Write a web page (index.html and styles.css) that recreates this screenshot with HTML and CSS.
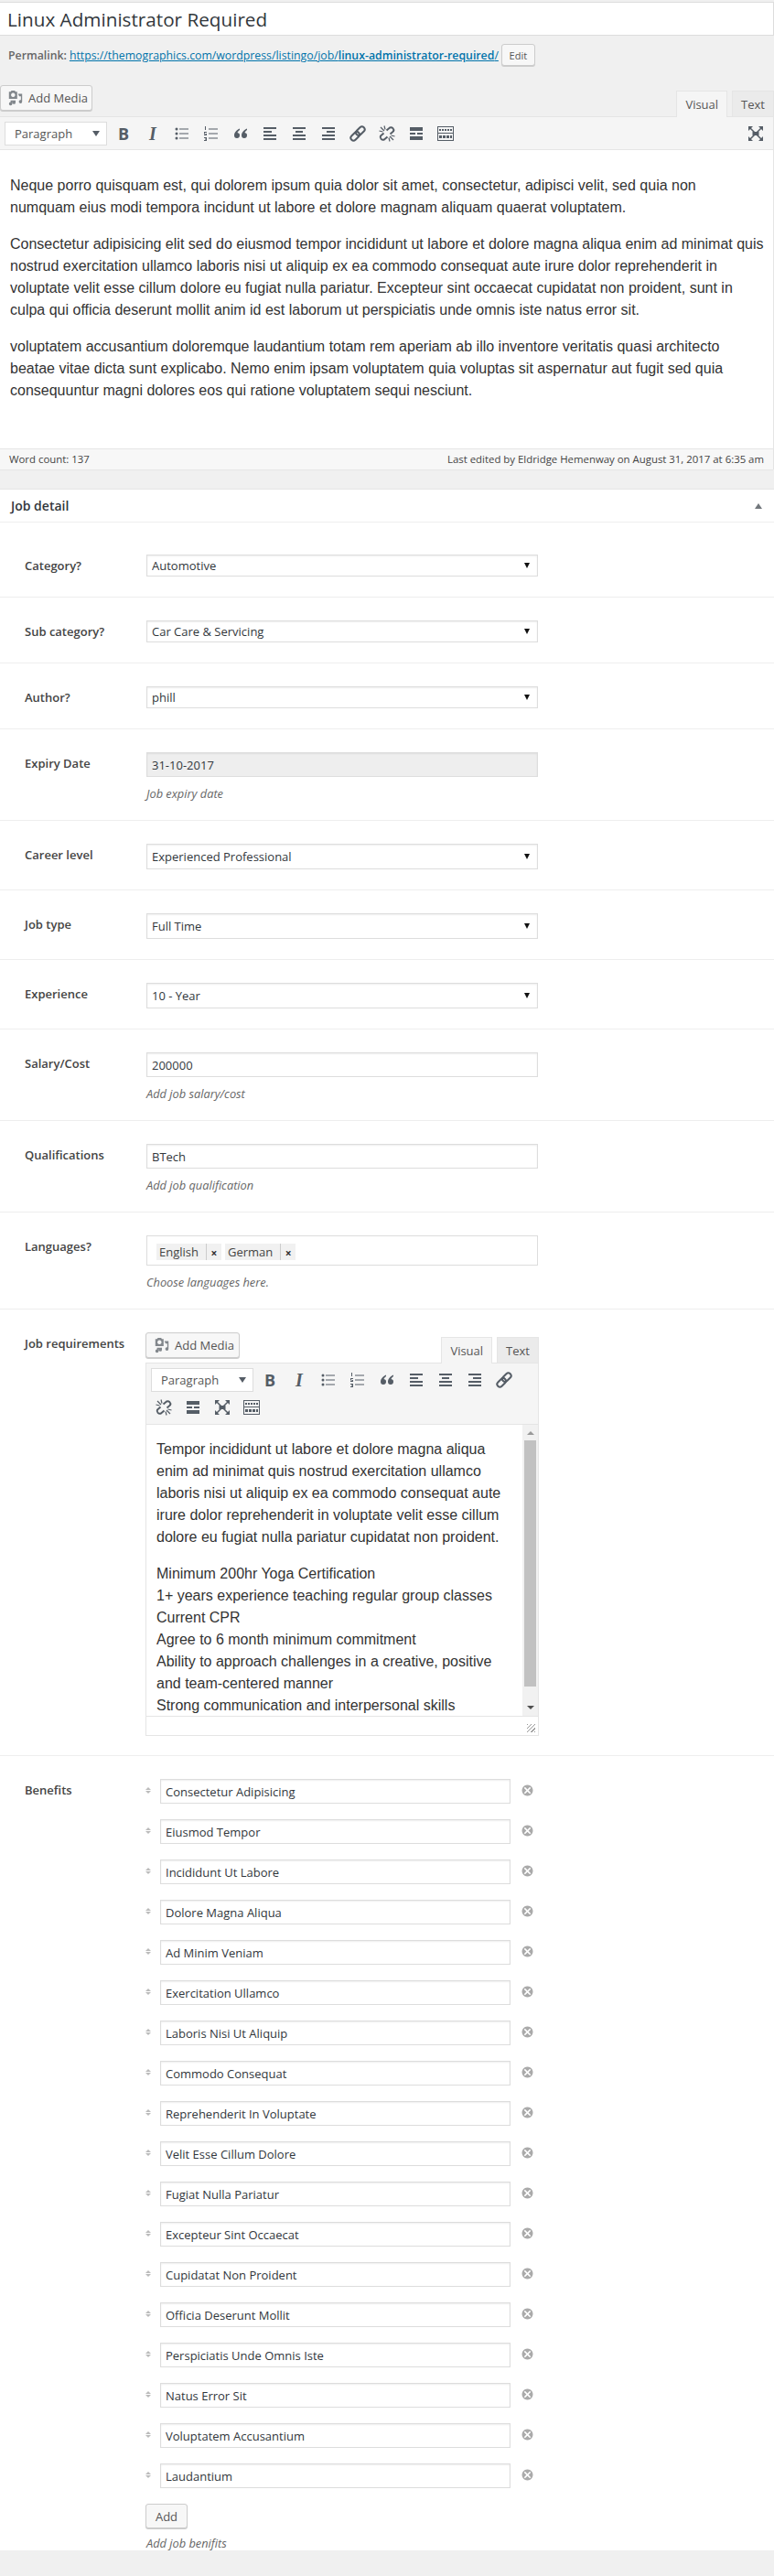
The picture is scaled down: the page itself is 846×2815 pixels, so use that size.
FILE: index.html
```html
<!DOCTYPE html>
<html lang="en">

<head>
    <meta charset="UTF-8">
    <title>Edit Job</title>
    <link rel="stylesheet" href="styles.css">
</head>

<body>
    <svg class="sprite" xmlns="http://www.w3.org/2000/svg">
        <symbol id="i-media" viewBox="0 0 20 20">
            <path d="M5 1h4l1 1.500h2V11H2V2.500h2z M7 4a2.500 2.500 0 1 0 .01 0z" fill-rule="evenodd" />
            <path d="M13 5h5v9.500a2 2 0 1 1-1.500-1.900V8h-2z M4 13h6v2.500a2 2 0 1 1-1.500-1.900V14.500H6v2.500a2 2 0 1 1-2-1.900z" />
        </symbol>
        <symbol id="i-ul" viewBox="0 0 20 20">
            <circle cx="4" cy="5" r="1.500" /><circle cx="4" cy="10" r="1.500" /><circle cx="4" cy="15" r="1.500" />
            <path d="M7 4.500h10v1H7zM7 9.500h10v1H7zM7 14.500h10v1H7z" />
        </symbol>
        <symbol id="i-ol" viewBox="0 0 20 20">
            <path d="M7 4.500h10v1H7zM7 9.500h10v1H7zM7 14.500h10v1H7z" />
            <path d="M3 2h1v4H3zM2 8h3v1H3v1h2v2H2v-1h2v-.5H2zM2 14h3v4H2v-1h2v-.5H3v-1h1V15H2z" />
        </symbol>
        <symbol id="i-quote" viewBox="0 0 20 20">
            <path d="M9 4.500C6 6 3 8.500 3 12a3 3 0 1 0 3.500-3c.3-1 1.300-2 2.500-3z M17 4.500c-3 1.500-6 4-6 7.500a3 3 0 1 0 3.500-3c.3-1 1.300-2 2.500-3z" />
        </symbol>
        <symbol id="i-left" viewBox="0 0 20 20">
            <path d="M3 3h14v2H3zM3 7h9v2H3zM3 11h14v2H3zM3 15h14v2H3z" />
        </symbol>
        <symbol id="i-center" viewBox="0 0 20 20">
            <path d="M3 3h14v2H3zM6 7h8v2H6zM3 11h14v2H3zM3 15h14v2H3z" />
        </symbol>
        <symbol id="i-right" viewBox="0 0 20 20">
            <path d="M3 3h14v2H3zM8 7h9v2H8zM3 11h14v2H3zM3 15h14v2H3z" />
        </symbol>
        <symbol id="i-link" viewBox="0 0 20 20">
            <g transform="rotate(-45 10 10)" fill="none" stroke="currentColor" stroke-width="2">
                <rect x="0.500" y="7" width="11" height="6" rx="3" />
                <rect x="8.500" y="7" width="11" height="6" rx="3" />
            </g>
        </symbol>
        <symbol id="i-unlink" viewBox="0 0 20 20">
            <path d="M9.500 6.500l3.500-3a3 3 0 0 1 4 4L13.500 10.500M10.500 13.500l-3.500 3a3 3 0 0 1-4-4L6.500 9.500" fill="none" stroke="currentColor" stroke-width="2" />
            <path d="M3 3l4 4M7 1.500l1 4M1.500 7l4 1M13 13l4 4M12 14.500l1 4M14.500 12l4 1" fill="none" stroke="currentColor" stroke-width="1.200" />
        </symbol>
        <symbol id="i-hr" viewBox="0 0 20 20">
            <path d="M3 3h14v4H3zM3 9h6v2H3zM11 9h6v2h-6zM3 13h14v4H3z" />
        </symbol>
        <symbol id="i-kb" viewBox="0 0 20 20">
            <path d="M1 2h18v16H1z M2 3v6h16V3z M2 10v7h16v-7z" fill-rule="evenodd" />
            <path d="M3 5h14v2H3z M3 12h14v3H3z" />
            <path d="M5 5h1v2H5zM8 5h1v2H8zM11 5h1v2h-1zM14 5h1v2h-1zM6 12h1v3H6zM10 12h1v3h-1zM14 12h1v3h-1z" fill="#f5f5f5" />
        </symbol>
        <symbol id="i-full" viewBox="0 0 20 20">
            <path d="M2 2h5L2 7zM18 2h-5l5 5zM2 18h5l-5-5zM18 18h-5l5-5z" />
            <path d="M4 4l12 12M16 4L4 16" fill="none" stroke="currentColor" stroke-width="1.500" />
            <path d="M6.500 8h7v4h-7z" />
        </symbol>
        <symbol id="i-remove" viewBox="0 0 20 20">
            <path d="M10 2a8 8 0 1 0 .01 0z M6.500 5L10 8.500 13.500 5 15 6.500 11.500 10l3.500 3.500-1.500 1.500L10 11.500 6.500 15 5 13.500 8.500 10 5 6.500z" fill-rule="evenodd" />
        </symbol>
    </svg>

    <div class="title-wrap">
        <input class="title-input" type="text" value="Linux Administrator Required">
    </div>
    <div class="permalink">
        <strong>Permalink:</strong>
        <a href="#">https://themographics.com/wordpress/listingo/job/<b>linux-administrator-required</b>/</a>
        <button class="btn btn-small" type="button">Edit</button>
    </div>

    <div class="editor-top">
        <button class="btn btn-media" type="button"><svg class="media-icon"><use href="#i-media" /></svg>Add Media</button>
        <div class="tabs">
            <span class="tab tab-on">Visual</span>
            <span class="tab">Text</span>
        </div>
    </div>
    <div class="editor main-editor">
        <div class="toolbar">
            <div class="format-select">Paragraph</div>
            <span class="tool tool-b">B</span>
            <span class="tool tool-i">I</span>
            <span class="tool"><svg><use href="#i-ul" /></svg></span>
            <span class="tool"><svg><use href="#i-ol" /></svg></span>
            <span class="tool"><svg><use href="#i-quote" /></svg></span>
            <span class="tool"><svg><use href="#i-left" /></svg></span>
            <span class="tool"><svg><use href="#i-center" /></svg></span>
            <span class="tool"><svg><use href="#i-right" /></svg></span>
            <span class="tool"><svg><use href="#i-link" /></svg></span>
            <span class="tool"><svg><use href="#i-unlink" /></svg></span>
            <span class="tool"><svg><use href="#i-hr" /></svg></span>
            <span class="tool"><svg><use href="#i-kb" /></svg></span>
            <span class="tool tool-end"><svg><use href="#i-full" /></svg></span>
        </div>
        <div class="content main-content">
            <p>Neque porro quisquam est, qui dolorem ipsum quia dolor sit amet, consectetur, adipisci velit, sed quia non numquam eius modi tempora incidunt ut labore et dolore magnam aliquam quaerat voluptatem.</p>
            <p>Consectetur adipisicing elit sed do eiusmod tempor incididunt ut labore et dolore magna aliqua enim ad minimat quis nostrud exercitation ullamco laboris nisi ut aliquip ex ea commodo consequat aute irure dolor reprehenderit in voluptate velit esse cillum dolore eu fugiat nulla pariatur. Excepteur sint occaecat cupidatat non proident, sunt in culpa qui officia deserunt mollit anim id est laborum ut perspiciatis unde omnis iste natus error sit.</p>
            <p>voluptatem accusantium doloremque laudantium totam rem aperiam ab illo inventore veritatis quasi architecto beatae vitae dicta sunt explicabo. Nemo enim ipsam voluptatem quia voluptas sit aspernatur aut fugit sed quia consequuntur magni dolores eos qui ratione voluptatem sequi nesciunt.</p>
        </div>
        <div class="status">
            <span>Word count: 137</span>
            <span>Last edited by Eldridge Hemenway on August 31, 2017 at 6:35 am</span>
        </div>
    </div>

    <div class="postbox">
        <div class="postbox-head">
            <h2>Job detail</h2>
            <span class="collapse"></span>
        </div>

        <div class="field field-first">
            <label>Category?</label>
            <div class="control"><div class="select-wrap"><select><option>Automotive</option></select></div></div>
        </div>
        <div class="field">
            <label>Sub category?</label>
            <div class="control"><div class="select-wrap"><select><option>Car Care &amp; Servicing</option></select></div></div>
        </div>
        <div class="field">
            <label>Author?</label>
            <div class="control"><div class="select-wrap"><select><option>phill</option></select></div></div>
        </div>
        <div class="field">
            <label>Expiry Date</label>
            <div class="control">
                <input class="text-input input-off" type="text" value="31-10-2017">
                <p class="help">Job expiry date</p>
            </div>
        </div>
        <div class="field field-tall">
            <label>Career level</label>
            <div class="control"><div class="select-wrap"><select><option>Experienced Professional</option></select></div></div>
        </div>
        <div class="field field-tall">
            <label>Job type</label>
            <div class="control"><div class="select-wrap"><select><option>Full Time</option></select></div></div>
        </div>
        <div class="field field-tall">
            <label>Experience</label>
            <div class="control"><div class="select-wrap"><select><option>10 - Year</option></select></div></div>
        </div>
        <div class="field">
            <label>Salary/Cost</label>
            <div class="control">
                <input class="text-input" type="text" value="200000">
                <p class="help">Add job salary/cost</p>
            </div>
        </div>
        <div class="field">
            <label>Qualifications</label>
            <div class="control">
                <input class="text-input" type="text" value="BTech">
                <p class="help">Add job qualification</p>
            </div>
        </div>
        <div class="field">
            <label>Languages?</label>
            <div class="control">
                <div class="tags">
                    <span class="tag">English<i>×</i></span>
                    <span class="tag">German<i>×</i></span>
                </div>
                <p class="help">Choose languages here.</p>
            </div>
        </div>

        <div class="field">
            <label>Job requirements</label>
            <div class="control">
                <div class="editor-top sub-top">
                    <button class="btn btn-media" type="button"><svg class="media-icon"><use href="#i-media" /></svg>Add Media</button>
                    <div class="tabs">
                        <span class="tab tab-on">Visual</span>
                        <span class="tab">Text</span>
                    </div>
                </div>
                <div class="editor sub-editor">
                    <div class="toolbar">
                        <div class="format-select">Paragraph</div>
                        <span class="tool tool-b">B</span>
                        <span class="tool tool-i">I</span>
                        <span class="tool"><svg><use href="#i-ul" /></svg></span>
                        <span class="tool"><svg><use href="#i-ol" /></svg></span>
                        <span class="tool"><svg><use href="#i-quote" /></svg></span>
                        <span class="tool"><svg><use href="#i-left" /></svg></span>
                        <span class="tool"><svg><use href="#i-center" /></svg></span>
                        <span class="tool"><svg><use href="#i-right" /></svg></span>
                        <span class="tool"><svg><use href="#i-link" /></svg></span>
                        <span class="tool"><svg><use href="#i-unlink" /></svg></span>
                        <span class="tool"><svg><use href="#i-hr" /></svg></span>
                        <span class="tool"><svg><use href="#i-full" /></svg></span>
                        <span class="tool"><svg><use href="#i-kb" /></svg></span>
                    </div>
                    <div class="sub-body">
                        <div class="content sub-content">
                            <p>Tempor incididunt ut labore et dolore magna aliqua enim ad minimat quis nostrud exercitation ullamco laboris nisi ut aliquip ex ea commodo consequat aute irure dolor reprehenderit in voluptate velit esse cillum dolore eu fugiat nulla pariatur cupidatat non proident.</p>
                            <p>Minimum 200hr Yoga Certification<br>1+ years experience teaching regular group classes<br>Current CPR<br>Agree to 6 month minimum commitment<br>Ability to approach challenges in a creative, positive and team-centered manner<br>Strong communication and interpersonal skills</p>
                        </div>
                        <div class="scrollbar">
                            <span class="arrow-up"></span>
                            <span class="thumb"></span>
                            <span class="arrow-down"></span>
                        </div>
                    </div>
                    <div class="sub-status"><span class="grip"></span></div>
                </div>
            </div>
        </div>

        <div class="field field-benefits">
            <label>Benefits</label>
            <div class="control">
                <div class="benefit"><span class="handle"></span><input class="text-input" type="text" value="Consectetur Adipisicing"><svg class="remove"><use href="#i-remove" /></svg></div>
                <div class="benefit"><span class="handle"></span><input class="text-input" type="text" value="Eiusmod Tempor"><svg class="remove"><use href="#i-remove" /></svg></div>
                <div class="benefit"><span class="handle"></span><input class="text-input" type="text" value="Incididunt Ut Labore"><svg class="remove"><use href="#i-remove" /></svg></div>
                <div class="benefit"><span class="handle"></span><input class="text-input" type="text" value="Dolore Magna Aliqua"><svg class="remove"><use href="#i-remove" /></svg></div>
                <div class="benefit"><span class="handle"></span><input class="text-input" type="text" value="Ad Minim Veniam"><svg class="remove"><use href="#i-remove" /></svg></div>
                <div class="benefit"><span class="handle"></span><input class="text-input" type="text" value="Exercitation Ullamco"><svg class="remove"><use href="#i-remove" /></svg></div>
                <div class="benefit"><span class="handle"></span><input class="text-input" type="text" value="Laboris Nisi Ut Aliquip"><svg class="remove"><use href="#i-remove" /></svg></div>
                <div class="benefit"><span class="handle"></span><input class="text-input" type="text" value="Commodo Consequat"><svg class="remove"><use href="#i-remove" /></svg></div>
                <div class="benefit"><span class="handle"></span><input class="text-input" type="text" value="Reprehenderit In Voluptate"><svg class="remove"><use href="#i-remove" /></svg></div>
                <div class="benefit"><span class="handle"></span><input class="text-input" type="text" value="Velit Esse Cillum Dolore"><svg class="remove"><use href="#i-remove" /></svg></div>
                <div class="benefit"><span class="handle"></span><input class="text-input" type="text" value="Fugiat Nulla Pariatur"><svg class="remove"><use href="#i-remove" /></svg></div>
                <div class="benefit"><span class="handle"></span><input class="text-input" type="text" value="Excepteur Sint Occaecat"><svg class="remove"><use href="#i-remove" /></svg></div>
                <div class="benefit"><span class="handle"></span><input class="text-input" type="text" value="Cupidatat Non Proident"><svg class="remove"><use href="#i-remove" /></svg></div>
                <div class="benefit"><span class="handle"></span><input class="text-input" type="text" value="Officia Deserunt Mollit"><svg class="remove"><use href="#i-remove" /></svg></div>
                <div class="benefit"><span class="handle"></span><input class="text-input" type="text" value="Perspiciatis Unde Omnis Iste"><svg class="remove"><use href="#i-remove" /></svg></div>
                <div class="benefit"><span class="handle"></span><input class="text-input" type="text" value="Natus Error Sit"><svg class="remove"><use href="#i-remove" /></svg></div>
                <div class="benefit"><span class="handle"></span><input class="text-input" type="text" value="Voluptatem Accusantium"><svg class="remove"><use href="#i-remove" /></svg></div>
                <div class="benefit"><span class="handle"></span><input class="text-input" type="text" value="Laudantium"><svg class="remove"><use href="#i-remove" /></svg></div>
                <button class="btn btn-add" type="button">Add</button>
                <p class="help">Add job benifits</p>
            </div>
        </div>
    </div>
</body>

</html>
```

FILE: styles.css
```css
* {
    box-sizing: border-box;
}

html,
body {
    height: 2815px;
}

body {
    margin: 0;
    padding-top: 2px;
    background: #f0f0f0;
    color: #444;
    font-family: "Open Sans", sans-serif;
    font-size: 13px;
    overflow: hidden;
}

.sprite {
    display: none;
}

/* title + permalink */
.title-wrap {
    height: 37px;
}

.title-input {
    display: block;
    width: 100%;
    height: 37px;
    padding: 0 8px;
    border: 1px solid #ddd;
    border-left: 0;
    background: #fff;
    color: #32373c;
    font-family: inherit;
    font-size: 20.700px;
    outline: 0;
}

.permalink {
    display: flex;
    align-items: center;
    gap: 3px;
    height: 33px;
    padding-left: 9px;
    padding-top: 9px;
    color: #666;
    font-size: 12.300px;
}

.permalink strong {
    font-weight: 600;
}

.permalink a {
    color: #0073aa;
}

.permalink b {
    font-weight: 600;
}

.btn {
    border: 1px solid #ccc;
    border-radius: 3px;
    background: #f7f7f7;
    box-shadow: 0 1px 0 #ccc;
    color: #555;
    font-family: inherit;
    font-size: 13px;
    padding: 0;
}

.btn-small {
    width: 37px;
    height: 24px;
    font-size: 11px;
}

/* editor */
.editor-top {
    display: flex;
    justify-content: space-between;
    align-items: flex-start;
    height: 55px;
    padding-top: 21px;
}

.btn-media {
    display: flex;
    align-items: center;
    width: 101px;
    height: 28px;
    padding-left: 7px;
}

.media-icon {
    width: 18px;
    height: 18px;
    margin-right: 5px;
    fill: #82878c;
}

.tabs {
    display: flex;
    gap: 5px;
    align-self: flex-end;
}

.tab {
    display: block;
    height: 28px;
    padding: 0 9px;
    border: 1px solid #e5e5e5;
    border-bottom: 0;
    background: #ebebeb;
    color: #555;
    line-height: 28px;
}

.tab-on {
    position: relative;
    z-index: 1;
    height: 29px;
    margin-bottom: -1px;
    background: #f5f5f5;
}

.editor {
    border: 1px solid #e5e5e5;
    background: #fff;
}

.main-editor {
    border-left: 0;
    border-bottom: 0;
}

.toolbar {
    display: flex;
    flex-wrap: wrap;
    align-items: center;
    row-gap: 4px;
    padding: 5px 3px;
    border-bottom: 1px solid #e5e5e5;
    background: #f5f5f5;
}

.main-editor .toolbar {
    padding-bottom: 4px;
}

.format-select {
    position: relative;
    width: 112px;
    height: 26px;
    margin: 0 2px;
    padding-left: 10px;
    border: 1px solid #ddd;
    background: #fff;
    color: #555;
    line-height: 24px;
}

.format-select::after {
    content: "";
    position: absolute;
    right: 7px;
    top: 9px;
    border: 4px solid transparent;
    border-top: 6px solid #555d66;
    border-bottom: 0;
}

.tool {
    display: flex;
    align-items: center;
    justify-content: center;
    width: 32px;
    height: 26px;
    color: #555d66;
}

.tool svg {
    width: 20px;
    height: 20px;
    fill: currentColor;
}

.tool-b {
    font-size: 18px;
    font-weight: 700;
}

.tool-i {
    font-family: "Liberation Serif", serif;
    font-size: 20px;
    font-style: italic;
    font-weight: 700;
}

.tool-end {
    margin-left: auto;
}

.content {
    color: #333;
    font-family: "Liberation Sans", Arial, sans-serif;
    font-size: 16px;
    line-height: 24px;
}

.content p {
    margin: 0 0 16px;
}

.main-content {
    height: 326px;
    padding: 27px 9px 0 11px;
}

.status {
    display: flex;
    justify-content: space-between;
    height: 23px;
    padding: 0 10px;
    border-top: 1px solid #e5e5e5;
    background: #f7f7f7;
    box-shadow: 0 1px 1px rgba(0, 0, 0, .04);
    font-size: 11.400px;
    line-height: 22px;
}

/* job detail box */
.postbox {
    margin-top: 21px;
    border-top: 1px solid #e5e5e5;
    background: #fff;
}

.postbox-head {
    display: flex;
    justify-content: space-between;
    align-items: center;
    height: 35px;
    padding: 0 13px 0 12px;
}

.postbox-head h2 {
    margin: 0;
    color: #32373c;
    font-size: 14px;
    font-weight: 600;
}

.collapse {
    border: 4px solid transparent;
    border-bottom: 6px solid #72777c;
    border-top: 0;
}

.field {
    display: flex;
    padding: 25px 0 21px 27px;
    border-top: 1px solid #eee;
}

.field-first {
    padding-top: 35px;
}

.field label {
    width: 133px;
    flex: none;
    padding-top: 3px;
    color: #444;
    font-weight: 600;
}

.control {
    width: 428px;
}

.select-wrap {
    position: relative;
    margin-bottom: 1px;
}

.select-wrap select {
    display: block;
    width: 100%;
    height: 24px;
    padding: 0 5px;
    border: 1px solid #ddd;
    border-radius: 0;
    background: #fff;
    color: #32373c;
    font-family: inherit;
    font-size: 13px;
    appearance: none;
    box-shadow: inset 0 1px 2px rgba(0, 0, 0, .07);
}

.field-tall .select-wrap select {
    height: 28px;
}

.select-wrap::after {
    content: "";
    position: absolute;
    right: 9px;
    top: 9px;
    border: 3px solid transparent;
    border-top: 6px solid #111;
    border-bottom: 0;
}

.field-tall .select-wrap::after {
    top: 11px;
}

.text-input {
    display: block;
    width: 100%;
    height: 27px;
    padding: 0 5px;
    border: 1px solid #ddd;
    background: #fff;
    color: #32373c;
    font-family: inherit;
    font-size: 13px;
    box-shadow: inset 0 1px 2px rgba(0, 0, 0, .07);
    outline: 0;
}

.input-off {
    background: #eee;
}

.help {
    margin: 10px 0 0;
    color: #666;
    font-size: 12.800px;
    font-style: italic;
    line-height: 16px;
}

.tags {
    display: flex;
    gap: 4px;
    height: 33px;
    padding: 8px 10px;
    border: 1px solid #ddd;
}

.tag {
    display: flex;
    height: 18px;
    padding-left: 3px;
    background: #f1f1f1;
    line-height: 18px;
}

.tag i {
    width: 17px;
    margin-left: 8px;
    padding-top: 2px;
    border-left: 1px solid #ccc;
    color: #333;
    text-align: center;
    font-size: 12px;
    font-style: normal;
    font-weight: 700;
}

.sub-top {
    height: 33px;
    padding-top: 0;
    margin: 0 -1px;
}

.sub-top .btn-media {
    width: 103px;
    padding-left: 8px;
}

.sub-top .tabs {
    align-self: flex-end;
}

.sub-editor {
    margin: 0 -1px;
}

.sub-body {
    display: flex;
    height: 319px;
    border-bottom: 1px solid #e5e5e5;
}

.sub-content {
    flex: 1;
    height: 318px;
    padding: 15px 10px 0 11px;
    overflow: hidden;
}

.scrollbar {
    display: flex;
    flex-direction: column;
    align-items: center;
    width: 17px;
    flex: none;
    background: #f1f1f1;
}

.arrow-up {
    margin: 7px 0 0;
    border: 4px solid transparent;
    border-bottom: 4px solid #999;
    border-top: 0;
}

.thumb {
    width: 13px;
    height: 269px;
    margin-top: 6px;
    background: #c1c1c1;
}

.arrow-down {
    margin-top: 21px;
    border: 4px solid transparent;
    border-top: 4px solid #505050;
    border-bottom: 0;
}

.sub-status {
    display: flex;
    justify-content: flex-end;
    align-items: flex-end;
    height: 20px;
    padding: 0 3px 3px 0;
}

.grip {
    width: 9px;
    height: 9px;
    background: repeating-linear-gradient(135deg, #999 0 1px, transparent 1px 3px);
}

/* benefits repeater */
.field-benefits {
    padding-bottom: 0;
}

.benefit {
    display: flex;
    align-items: flex-start;
    height: 44px;
    margin-left: -1px;
}

.benefit .text-input {
    width: 383px;
    margin-left: 10px;
}

.handle {
    position: relative;
    width: 6px;
    height: 8px;
    margin-top: 8px;
    flex: none;
}

.handle::before,
.handle::after {
    content: "";
    position: absolute;
    left: 0;
    border: 3px solid transparent;
}

.handle::before {
    top: 1px;
    border-bottom: 3px solid #bbb;
    border-top: 0;
}

.handle::after {
    top: 5px;
    border-top: 3px solid #bbb;
    border-bottom: 0;
}

.remove {
    width: 15px;
    height: 15px;
    margin: 5px 0 0 11px;
    flex: none;
    fill: #aaa;
}

.btn-add {
    display: block;
    width: 46px;
    height: 27px;
    margin-left: -1px;
}

.btn-add + .help {
    margin-top: 8px;
}
```
